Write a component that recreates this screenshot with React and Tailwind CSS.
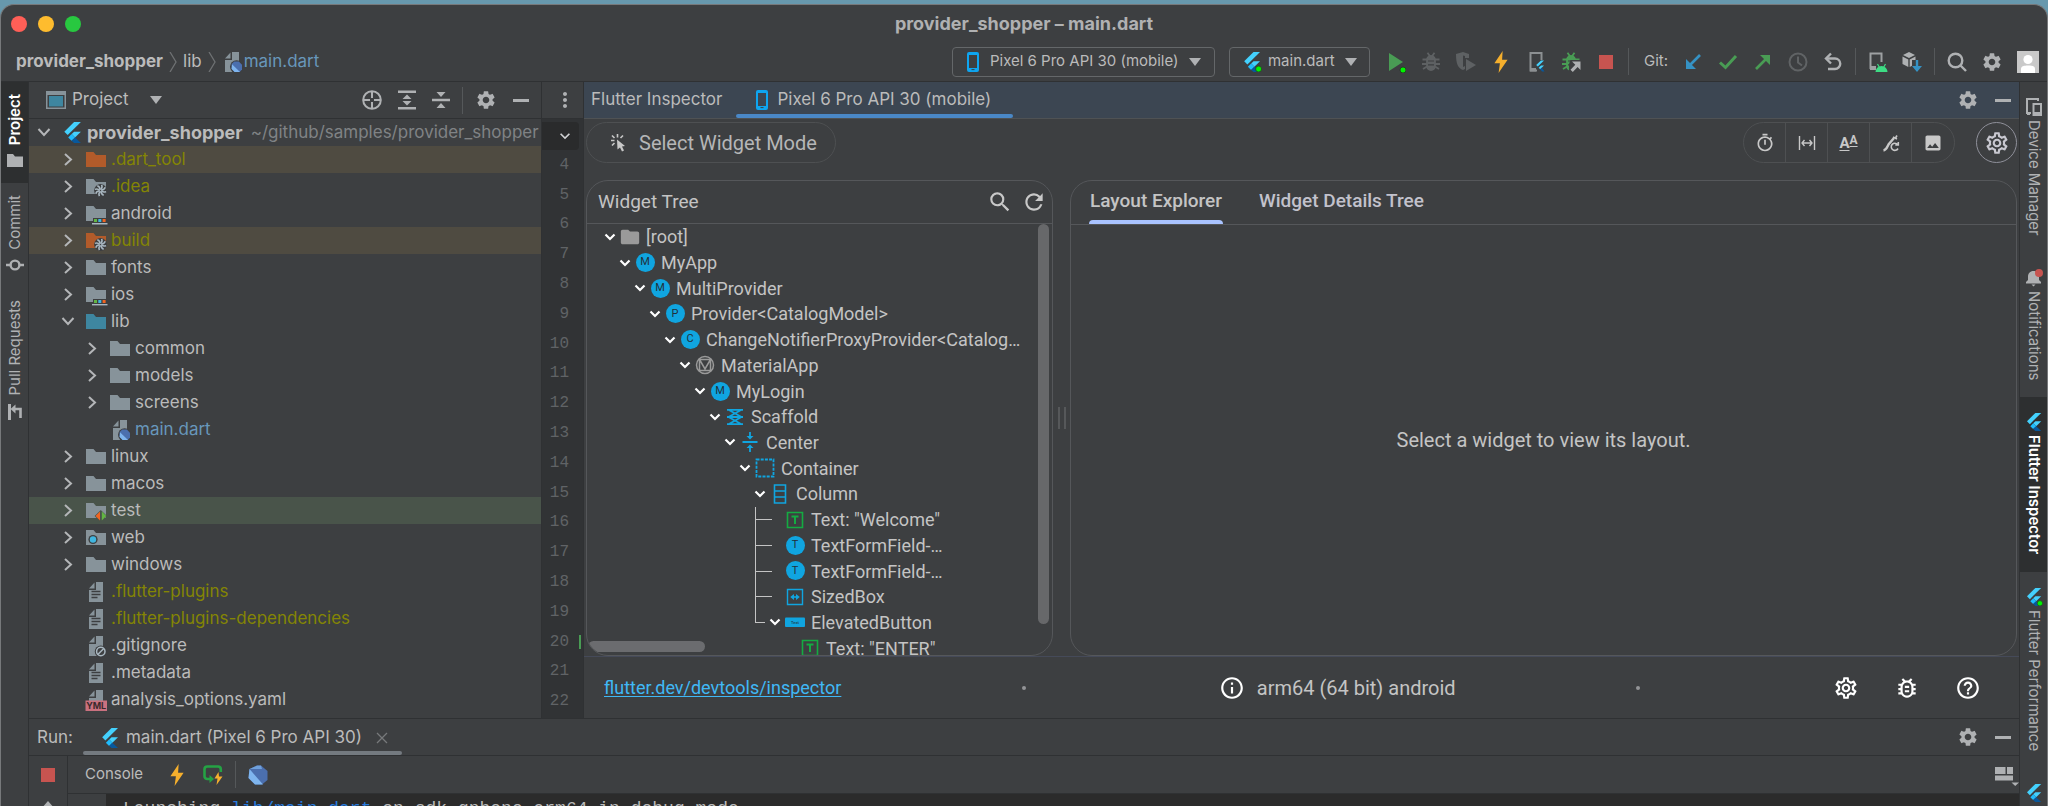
import {
  MdExpandMore,
  MdFolder,
  MdHelpOutline,
  MdImage,
  MdMoreVert,
  MdOutlineBugReport,
  MdOutlineInfo,
  MdOutlineSettings,
  MdOutlineTimer,
  MdRefresh,
  MdSearch,
  MdSettings,
} from "react-icons/md";

const projectRows = [
  { name: ".dart_tool", level: 1, icon: "excluded", color: "text-[#848504]", bg: "bg-[#4f4b41]", arrow: "right" },
  { name: ".idea", level: 1, icon: "idea", color: "text-[#848504]", arrow: "right" },
  { name: "android", level: 1, icon: "module", arrow: "right" },
  { name: "build", level: 1, icon: "build", color: "text-[#848504]", bg: "bg-[#4f4b41]", arrow: "right" },
  { name: "fonts", level: 1, icon: "folder", arrow: "right" },
  { name: "ios", level: 1, icon: "module", arrow: "right" },
  { name: "lib", level: 1, icon: "source", arrow: "down" },
  { name: "common", level: 2, icon: "folder", arrow: "right" },
  { name: "models", level: 2, icon: "folder", arrow: "right" },
  { name: "screens", level: 2, icon: "folder", arrow: "right" },
  { name: "main.dart", level: 2, icon: "dart", color: "text-[#6897bb]" },
  { name: "linux", level: 1, icon: "folder", arrow: "right" },
  { name: "macos", level: 1, icon: "folder", arrow: "right" },
  { name: "test", level: 1, icon: "test", bg: "bg-[#49544a]", arrow: "right" },
  { name: "web", level: 1, icon: "web", arrow: "right" },
  { name: "windows", level: 1, icon: "folder", arrow: "right" },
  { name: ".flutter-plugins", level: 1, icon: "text", color: "text-[#848504]" },
  { name: ".flutter-plugins-dependencies", level: 1, icon: "text", color: "text-[#848504]" },
  { name: ".gitignore", level: 1, icon: "ignore" },
  { name: ".metadata", level: 1, icon: "text" },
  { name: "analysis_options.yaml", level: 1, icon: "yaml" },
];

const widgetRows = [
  { name: "[root]", depth: 0, icon: "folder", open: true },
  { name: "MyApp", depth: 1, icon: "M", open: true },
  { name: "MultiProvider", depth: 2, icon: "M", open: true },
  { name: "Provider<CatalogModel>", depth: 3, icon: "P", open: true },
  { name: "ChangeNotifierProxyProvider<Catalog…", depth: 4, icon: "C", open: true },
  { name: "MaterialApp", depth: 5, icon: "material", open: true },
  { name: "MyLogin", depth: 6, icon: "M", open: true },
  { name: "Scaffold", depth: 7, icon: "scaffold", open: true },
  { name: "Center", depth: 8, icon: "center", open: true },
  { name: "Container", depth: 9, icon: "container", open: true },
  { name: "Column", depth: 10, icon: "column", open: true },
  { name: 'Text: "Welcome"', depth: 11, icon: "text", line: "mid" },
  { name: "TextFormField-…", depth: 11, icon: "T", line: "mid" },
  { name: "TextFormField-…", depth: 11, icon: "T", line: "mid" },
  { name: "SizedBox", depth: 11, icon: "sized", line: "mid" },
  { name: "ElevatedButton", depth: 11, icon: "button", open: true, line: "last" },
  { name: 'Text: "ENTER"', depth: 12, icon: "text" },
];

const lineNumbers = Array.from({ length: 19 }, (_, i) => i + 4);

function FlutterLogo({ className = "h-5 w-5", running = false }) {
  return (
    <svg viewBox="0 0 20 20" className={`shrink-0 ${className}`}>
      <path d="M11.5 0H18L5.4 12.4 2.2 9.2Z" fill="#44d1fd" />
      <path d="M11.5 9.2H18L12.4 14.7 9.2 11.5Z" fill="#44d1fd" />
      <path d="M5.9 14.7 9.1 11.5 12.4 14.7 9.1 17.9Z" fill="#1fbcfd" />
      <path d="M9.1 17.9 12.4 14.7 18 20H11.5Z" fill="#08589c" />
      {running && <circle cx="16.6" cy="17" r="3" fill="#00f400" stroke="#2a3a2a" strokeWidth="0.8" />}
    </svg>
  );
}

function FolderShape({ color = "#87939a" }) {
  return <path d="M0 2H7.5L10 5H20V17H0Z" fill={color} />;
}

function PageShape({ color = "#87939a" }) {
  return (
    <>
      <path d="M10 0H17V20H3V8H10Z" fill={color} />
      <path d="M8.5 0.5V6.5H3Z" fill={color} />
    </>
  );
}

function Pinwheel() {
  return (
    <g>
      <circle cx="14.5" cy="13.5" r="6.4" fill="#3d3f41" />
      <g fill="none" stroke="#a9b7c0" strokeWidth="1.5">
        {[0, 45, 90, 135, 180, 225, 270, 315].map((angle) => (
          <path key={angle} d="M14.5 12.6Q17 10.6 15.6 7.9" transform={`rotate(${angle} 14.5 13.5)`} />
        ))}
      </g>
    </g>
  );
}

function FileIcon({ type }) {
  return (
    <svg viewBox="0 0 20 20" className="h-5 w-5 shrink-0 overflow-visible">
      {type === "folder" && <FolderShape />}
      {type === "excluded" && <FolderShape color="#b25b2a" />}
      {type === "source" && <FolderShape color="#3e86a0" />}
      {type === "idea" && (
        <>
          <FolderShape />
          <Pinwheel />
        </>
      )}
      {type === "build" && (
        <>
          <FolderShape color="#b25b2a" />
          <Pinwheel />
        </>
      )}
      {type === "module" && (
        <>
          <FolderShape />
          <path d="M7 14H21V21H7Z" fill="#3d3f41" />
          <path d="M8 15H11V18H8Z" fill="#62b543" />
          <path d="M12.3 15H15.3V18H12.3Z" fill="#40b6e0" />
          <path d="M16.6 15H19.6V18H16.6Z" fill="#f26522" />
          <path d="M6 19H21.5V20.4H6Z" fill="#a9b7c0" />
        </>
      )}
      {type === "test" && (
        <>
          <FolderShape />
          <path d="M14.8 9 21 15 14.8 21 8.6 15Z" fill="#49544a" />
          <path d="M14 10.5V19.5L9.5 15Z" fill="#f26522" />
          <path d="M15.8 10.5V19.5L20.3 15Z" fill="#62b543" />
        </>
      )}
      {type === "web" && (
        <>
          <FolderShape />
          <circle cx="7" cy="11.5" r="4.6" fill="#3d3f41" />
          <circle cx="7" cy="11.5" r="3.2" fill="#40b6e0" />
        </>
      )}
      {type === "text" && (
        <>
          <PageShape />
          <path d="M5.5 9.5H14.5M5.5 12.5H14.5M5.5 15.5H11.5" stroke="#3d3f41" strokeWidth="1.4" />
        </>
      )}
      {type === "ignore" && (
        <>
          <PageShape />
          <circle cx="14.8" cy="15.5" r="6" fill="#3d3f41" />
          <circle cx="14.8" cy="15.5" r="4.2" fill="none" stroke="#a9b7c0" strokeWidth="1.5" />
          <path d="M11.8 18.5 17.8 12.5" stroke="#a9b7c0" strokeWidth="1.5" />
        </>
      )}
      {type === "dart" && (
        <>
          <PageShape />
          <circle cx="14.6" cy="14.8" r="6.6" fill="#3d3f41" />
          <path d="M9.6 12 12.2 9.6H16.8L20 12.8V17.4L17.6 20H12.6L9.6 16.8Z" fill="#4b6fae" />
          <path d="M10 12.2 18 20H12.6L9.6 17Z" fill="#7fb5ee" />
        </>
      )}
      {type === "yaml" && (
        <>
          <PageShape />
          <path d="M-0.5 10.5H21V21H-0.5Z" fill="#c9717f" />
          <text x="10.2" y="19" textAnchor="middle" fontSize="9" fontWeight="700" fill="#3a2a2d">
            YML
          </text>
        </>
      )}
    </svg>
  );
}

function TreeArrow({ direction }) {
  if (!direction) return <span className="w-5 shrink-0" />;
  return (
    <svg viewBox="0 0 20 20" className="h-5 w-5 shrink-0" fill="none" stroke="#b4b6b8" strokeWidth="2">
      {direction === "right" ? <path d="M7 4 13 9.5 7 15" /> : <path d="M4.5 6 10 12 15.5 6" />}
    </svg>
  );
}

function Caret() {
  return (
    <svg viewBox="0 0 12 8" className="h-2 w-3 shrink-0">
      <path d="M0 0H12L6 8Z" fill="#afb1b3" />
    </svg>
  );
}

function Divider({ className = "" }) {
  return <span className={`h-[27px] w-px shrink-0 bg-[#55585a] ${className}`} />;
}

function IconButton({ label, children }) {
  return (
    <button type="button" aria-label={label} className="flex shrink-0 items-center justify-center">
      {children}
    </button>
  );
}

function Minus() {
  return <span className="h-[3px] w-4 bg-[#afb1b3]" />;
}

function TitleBar() {
  return (
    <header className="grid h-[37px] grid-cols-[1fr_auto_1fr] items-center px-2.5">
      <div className="flex gap-[11px]">
        <span className="h-4 w-4 rounded-full bg-[#ff5f57]" />
        <span className="h-4 w-4 rounded-full bg-[#febc2e]" />
        <span className="h-4 w-4 rounded-full bg-[#28c840]" />
      </div>
      <h1 className="text-[18px] font-bold text-[#b0b1b2]">provider_shopper – main.dart</h1>
      <span />
    </header>
  );
}

function BreadcrumbArrow() {
  return (
    <svg viewBox="0 0 8 20" className="mx-1.5 h-5 w-2" fill="none" stroke="#6e7173" strokeWidth="1.3">
      <path d="M1 0 7 10 1 20" />
    </svg>
  );
}

function PhoneIcon() {
  return (
    <svg viewBox="0 0 14 20" className="h-5 w-3.5 shrink-0">
      <path
        d="M3 0H11A2 2 0 0 1 13 2V18A2 2 0 0 1 11 20H3A2 2 0 0 1 1 18V2A2 2 0 0 1 3 0ZM3 3V16H11V3Z"
        fill="#0ea5f0"
        fillRule="evenodd"
      />
      <path d="M5.5 17.6H8.5" stroke="#3d3f41" />
    </svg>
  );
}

function Bolt() {
  return (
    <svg viewBox="0 0 14 20" className="h-[22px] w-5">
      <path d="M8.5 0 1 11.2H6L4.8 20 13 8H8Z" fill="#f5af2d" />
    </svg>
  );
}

function Beetle({ color }) {
  return (
    <g fill="none" stroke={color} strokeWidth="1.8">
      <path d="M6 8A4 4 0 0 1 14 8V14A4 4 0 0 1 6 14Z" fill={color} />
      <path d="M6.5 0.8 8.8 4M13.5 0.8 11.2 4M1.5 7.5H6M1 12H6M2 17 6 14.5M18.5 7.5H14M19 12H14M18 17 14 14.5" />
      <path d="M7 9H13M7 12.8H13" stroke="#3d3f41" strokeWidth="1.2" />
    </g>
  );
}

function ToolbarIcons() {
  return (
    <>
      <div className="flex items-center gap-[15px]">
        <IconButton label="Run">
          <svg viewBox="0 0 20 22" className="h-[22px] w-5">
            <path d="M3 2 17 11 3 20Z" fill="#499c54" />
            <circle cx="17" cy="19" r="3" fill="#00f400" stroke="#233523" strokeWidth="0.8" />
          </svg>
        </IconButton>
        <IconButton label="Debug">
          <svg viewBox="0 0 20 20" className="h-5 w-5">
            <Beetle color="#5e6163" />
          </svg>
        </IconButton>
        <IconButton label="Run with coverage">
          <svg viewBox="0 0 20 20" className="h-5 w-5">
            <path d="M0 2 7 0 13 2V6H9V4L7 3.5V15L9 14V17L7 18C2 16 0 12 0 2Z" fill="#5e6163" />
            <path d="M10 7 20 13 10 19Z" fill="#5e6163" />
          </svg>
        </IconButton>
        <IconButton label="Hot reload">
          <Bolt />
        </IconButton>
        <IconButton label="Flutter device">
          <svg viewBox="0 0 20 20" className="h-5 w-5">
            <path d="M11 18.5H4.5V1H15.5V8" fill="none" stroke="#8c9092" strokeWidth="2" />
            <path d="M4 16H10V19.5H4Z" fill="#8c9092" />
            <path d="M15 8.5H18L11.8 14.5 10.2 13Z" fill="#44d1fd" />
            <path d="M15 13.5H18L14.2 17.2 12.7 15.8Z" fill="#44d1fd" />
            <path d="M14.2 17.2 15.8 15.8 18.5 19.5H16Z" fill="#08589c" />
          </svg>
        </IconButton>
        <IconButton label="Attach debugger">
          <svg viewBox="0 0 20 20" className="h-5 w-5">
            <Beetle color="#499c54" />
            <path d="M9.5 8H20V20H8V12Z" fill="#3d3f41" />
            <path d="M11 9.5H19.5V18L16.6 15.1 11.8 20 9.5 17.7 14.3 12.8Z" fill="#afb1b3" />
          </svg>
        </IconButton>
        <IconButton label="Stop">
          <span className="ml-[3px] h-3.5 w-3.5 bg-[#c75450]" />
        </IconButton>
        <Divider />
        <span className="text-[15px]">Git:</span>
        <IconButton label="Update project">
          <svg viewBox="0 0 20 20" className="h-5 w-5">
            <path d="M17 3 7 13" stroke="#3592c4" strokeWidth="2.6" />
            <path d="M3 7V17H13Z" fill="#3592c4" />
          </svg>
        </IconButton>
        <IconButton label="Commit">
          <svg viewBox="0 0 20 20" className="h-5 w-5" fill="none" stroke="#499c54" strokeWidth="3">
            <path d="M2 10.5 7.5 15.5 18 4" />
          </svg>
        </IconButton>
        <IconButton label="Push">
          <svg viewBox="0 0 20 20" className="h-5 w-5">
            <path d="M3 17 13 7" stroke="#499c54" strokeWidth="2.6" />
            <path d="M7 3H17V13Z" fill="#499c54" />
          </svg>
        </IconButton>
        <IconButton label="Show history">
          <svg viewBox="0 0 20 20" className="h-5 w-5" fill="none" stroke="#606365" strokeWidth="2">
            <circle cx="10" cy="10" r="8.5" />
            <path d="M10 4.5V10.5L14 13.5" />
          </svg>
        </IconButton>
        <IconButton label="Rollback">
          <svg viewBox="0 0 20 20" className="h-5 w-5" fill="none" stroke="#afb1b3" strokeWidth="2.4">
            <path d="M3 6.5H12A5.2 5.2 0 0 1 12 17H5" />
            <path d="M8 1.5 3 6.5 8 11.5" />
          </svg>
        </IconButton>
      </div>
      <Divider className="mx-3" />
      <div className="flex items-center gap-3.5">
        <IconButton label="Device manager">
          <svg viewBox="0 0 20 20" className="h-5 w-5">
            <path d="M8 16H2.5V1.5H13.5V10" fill="none" stroke="#9da0a2" strokeWidth="2" />
            <path d="M2 14H8V18H2Z" fill="#9da0a2" />
            <path d="M7.5 20A6 6 0 0 1 19.5 20Z" fill="#3ddc84" />
            <path d="M9.5 12 11.5 15.5M17.5 12 15.5 15.5" stroke="#3ddc84" strokeWidth="1.2" />
          </svg>
        </IconButton>
        <IconButton label="SDK manager">
          <svg viewBox="0 0 20 20" className="h-5 w-5">
            <path d="M7 0 13 3 7 6 1 3Z" fill="#afb1b3" />
            <path d="M0.5 4.5 6.3 7.4V15L0.5 12Z" fill="#afb1b3" />
            <path d="M13.5 4.5 7.7 7.4V15L10 13.8V8H13.5Z" fill="#afb1b3" />
            <path d="M13.8 8H16.2V14H20L15 20 10 14H13.8Z" fill="#3592c4" />
          </svg>
        </IconButton>
      </div>
      <Divider className="mx-3" />
      <div className="flex items-center gap-3.5">
        <IconButton label="Search everywhere">
          <svg viewBox="0 0 20 20" className="h-5 w-5" fill="none" stroke="#afb1b3" strokeWidth="2.4">
            <circle cx="8.5" cy="8.5" r="6.8" />
            <path d="M13.5 13.5 19 19" />
          </svg>
        </IconButton>
        <IconButton label="Settings">
          <MdSettings className="h-[22px] w-[22px] text-[#afb1b3]" />
        </IconButton>
        <IconButton label="Account">
          <svg viewBox="0 0 22 22" className="h-[22px] w-[22px]">
            <path d="M0 0H22V22H0Z" fill="#c9c9c9" />
            <circle cx="11" cy="8.5" r="4.6" fill="#fff" />
            <path d="M4 22V18C4 15 7 14.5 11 14.5S18 15 18 18V22Z" fill="#fff" />
          </svg>
        </IconButton>
      </div>
    </>
  );
}

function Toolbar() {
  return (
    <div className="flex h-[40px] items-center border-b border-[#2f3133] pr-2 pl-[15px]">
      <nav aria-label="Breadcrumb" className="flex items-center text-[17px]">
        <a href="#root" className="font-bold">provider_shopper</a>
        <BreadcrumbArrow />
        <a href="#lib">lib</a>
        <BreadcrumbArrow />
        <a href="#main" className="flex items-center gap-0.5 text-[#6897bb]">
          <FileIcon type="dart" />
          main.dart
        </a>
      </nav>
      <div className="ml-auto flex items-center gap-3.5">
        <label className="flex h-[30px] items-center gap-2.5 rounded-[4px] border border-[#646769] px-[13px]">
          <PhoneIcon />
          <select aria-label="Device" className="appearance-none text-[15px] outline-none">
            <option>Pixel 6 Pro API 30 (mobile)</option>
          </select>
          <Caret />
        </label>
        <label className="flex h-[30px] items-center gap-1.5 rounded-[4px] border border-[#646769] px-3">
          <FlutterLogo running />
          <select aria-label="Run configuration" className="mr-1 appearance-none text-[15px] outline-none">
            <option>main.dart</option>
          </select>
          <Caret />
        </label>
      </div>
      <div className="ml-4 flex items-center">
        <ToolbarIcons />
      </div>
    </div>
  );
}

function RailButton({ label, active = false, side = "left", icon }) {
  return (
    <button
      type="button"
      className={`flex w-full flex-col items-center text-[15px] ${
        active ? "bg-[#2d2f30] font-semibold text-white" : "text-[#b0b2b4]"
      } ${side === "left" ? "gap-2 pt-3 pb-4" : "gap-1 pt-4 pb-[17px]"}`}
    >
      {side === "right" && icon}
      <span className={`leading-5 [writing-mode:vertical-rl] ${side === "left" ? "rotate-180" : ""}`}>{label}</span>
      {side === "left" && icon}
    </button>
  );
}

function LeftRail() {
  return (
    <aside className="w-7 shrink-0 border-r border-[#2f3133]">
      <RailButton
        label="Project"
        active
        icon={
          <svg viewBox="0 0 16 14" className="h-3.5 w-4">
            <path d="M0 1H6L8 3.5H16V14H0Z" fill="#afb1b3" />
          </svg>
        }
      />
      <RailButton
        label="Commit"
        icon={
          <svg viewBox="0 0 18 14" className="h-3.5 w-[18px]" fill="none" stroke="#afb1b3" strokeWidth="2.4">
            <circle cx="9" cy="7" r="4.4" />
            <path d="M0 7H4.5M13.5 7H18" />
          </svg>
        }
      />
      <RailButton
        label="Pull Requests"
        icon={
          <svg viewBox="0 0 16 16" className="h-4 w-4" fill="none" stroke="#afb1b3">
            <path d="M2.5 0V16" strokeWidth="3" />
            <path d="M7 5H13.5V14" strokeWidth="2.6" />
            <path d="M8.5 0.5V9.5L3.5 5Z" fill="#afb1b3" stroke="none" />
          </svg>
        }
      />
    </aside>
  );
}

function RightRail() {
  return (
    <aside className="w-7 shrink-0 overflow-hidden border-l border-[#2f3133]">
      <RailButton
        side="right"
        label="Device Manager"
        icon={
          <svg viewBox="0 0 18 18" className="h-[18px] w-[18px]" fill="none" stroke="#afb1b3" strokeWidth="2">
            <path d="M13 3V1H2V15H6" />
            <path d="M2 15.5H5" strokeWidth="3" />
            <path d="M8.5 6H16V17H8.5Z" />
            <path d="M8 15.5H16.5" strokeWidth="3" />
          </svg>
        }
      />
      <RailButton
        side="right"
        label="Notifications"
        icon={
          <svg viewBox="0 0 18 18" className="h-[18px] w-[18px]">
            <path d="M1 14.5V13L3 11V7.5C3 4.5 5 2 8.5 2S14 4.5 14 7.5V11L16 13V14.5Z" fill="#afb1b3" />
            <path d="M6.5 15.5H10.5L8.5 17.5Z" fill="#afb1b3" />
            <circle cx="14" cy="4" r="4" fill="#c75450" />
          </svg>
        }
      />
      <RailButton side="right" label="Flutter Inspector" active icon={<FlutterLogo className="h-[18px] w-[18px]" />} />
      <RailButton
        side="right"
        label="Flutter Performance"
        icon={<FlutterLogo className="h-[18px] w-[18px]" running />}
      />
      <button type="button" aria-label="Flutter Outline" className="flex w-full justify-center pt-4">
        <FlutterLogo className="h-[18px] w-[18px]" />
      </button>
    </aside>
  );
}

function ProjectPanel() {
  return (
    <section className="flex w-[512px] shrink-0 flex-col">
      <div className="flex h-[37px] items-center border-b border-[#2f3133] pr-3 pl-[17px]">
        <svg viewBox="0 0 20 18" className="h-[18px] w-5">
          <path d="M0 0H20V18H0Z" fill="#87939a" />
          <path d="M1.5 4H18.5V16.5H1.5Z" fill="#3d3f41" />
          <path d="M3 5H17V15.5H3Z" fill="#3e86a0" />
        </svg>
        <button type="button" className="ml-1.5 flex items-center gap-[22px] text-[17px]">
          Project
          <Caret />
        </button>
        <div className="ml-auto flex items-center gap-4">
          <IconButton label="Select opened file">
            <svg viewBox="0 0 20 20" className="h-5 w-5" fill="none" stroke="#afb1b3" strokeWidth="2">
              <circle cx="10" cy="10" r="8.8" />
              <path d="M10 1V8M10 12V19M1 10H8M12 10H19" />
            </svg>
          </IconButton>
          <IconButton label="Expand all">
            <svg viewBox="0 0 18 20" className="h-5 w-[18px]" fill="#afb1b3">
              <path d="M0 0.5H18V3H0ZM0 17H18V19.5H0ZM9 4.5 13.5 9H4.5ZM9 15.5 13.5 11H4.5Z" />
            </svg>
          </IconButton>
          <IconButton label="Collapse all">
            <svg viewBox="0 0 18 20" className="h-5 w-[18px]" fill="#afb1b3">
              <path d="M0 8.8H18V11.2H0ZM9 7 13.5 2H4.5ZM9 13 13.5 18H4.5Z" />
            </svg>
          </IconButton>
          <Divider className="-mx-1" />
          <IconButton label="Panel options">
            <MdSettings className="h-[22px] w-[22px] text-[#afb1b3]" />
          </IconButton>
          <IconButton label="Hide project panel">
            <Minus />
          </IconButton>
        </div>
      </div>
      <ul className="min-h-0 flex-1 overflow-hidden text-[17px]">
        <li className="flex h-[27px] items-center pl-[5px] whitespace-nowrap">
          <TreeArrow direction="down" />
          <FlutterLogo className="ml-2 h-[21px] w-[21px]" />
          <span className="ml-1 text-[18px] font-bold">provider_shopper</span>
          <span className="ml-2 text-[#808385]">~/github/samples/provider_shopper</span>
        </li>
        {projectRows.map((row) => (
          <li
            key={row.name}
            className={`flex h-[27px] items-center ${row.bg ?? ""} ${row.color ?? ""}`}
            style={{ paddingLeft: 5 + row.level * 24 }}
          >
            <TreeArrow direction={row.arrow} />
            <span className="mr-[5px] ml-2">
              <FileIcon type={row.icon} />
            </span>
            {row.name}
          </li>
        ))}
      </ul>
    </section>
  );
}

function EditorGutter() {
  return (
    <section className="flex w-[43px] shrink-0 flex-col border-x border-[#2f3133] bg-[#313335]">
      <div className="flex h-[37px] items-center justify-end border-b border-[#2f3133] bg-[#3d3f41] pr-1.5">
        <IconButton label="More">
          <MdMoreVert className="h-6 w-6 text-[#afb1b3]" />
        </IconButton>
      </div>
      <button
        type="button"
        aria-label="Show tabs"
        className="mt-[3px] mr-1 flex h-7 items-center justify-end rounded-r bg-[#2a2b2c] pr-1"
      >
        <MdExpandMore className="h-5 w-5 text-[#d0d2d4]" />
      </button>
      <ol className="flex min-h-0 flex-1 flex-col pb-0.5 text-right font-[Liberation_Mono,monospace] text-base text-[#606366]">
        {lineNumbers.map((n) => (
          <li
            key={n}
            className={`mr-0.5 flex flex-1 items-center justify-end pr-3 ${
              n === 20 ? "bg-[linear-gradient(#499c54,#499c54)] bg-[length:2px_14px] bg-right bg-no-repeat" : ""
            }`}
          >
            {n}
          </li>
        ))}
      </ol>
    </section>
  );
}

function WidgetIcon({ type }) {
  if (type.length === 1) {
    return (
      <span className="flex h-[19px] w-[19px] items-center justify-center rounded-full bg-[#10a5e0] text-[11px] text-[#20303a]">
        {type}
      </span>
    );
  }
  if (type === "folder") return <MdFolder className="h-[22px] w-[22px] shrink-0 text-[#9a9a9a]" />;
  return (
    <svg viewBox="0 0 20 20" className="h-5 w-5" fill="none" stroke="#10a5e0" strokeWidth="1.6">
      {type === "material" && (
        <g stroke="#9a9a9a" strokeWidth="1.5">
          <circle cx="10" cy="10" r="8.5" />
          <path d="M4.5 4.5H15.5V15.5H4.5ZM4.5 4.5 10 14 15.5 4.5" />
        </g>
      )}
      {type === "scaffold" && (
        <path d="M2 2.8H18M2 10H18M2 17.2H18M4 3 16 9.8M16 3 4 9.8M4 10.2 16 17M16 10.2 4 17" strokeWidth="1.8" />
      )}
      {type === "center" && (
        <>
          <path d="M2.5 10H17.5M10 0V5M10 15V20" strokeWidth="1.8" />
          <path d="M6.5 4H13.5L10 7.5ZM6.5 16H13.5L10 12.5Z" fill="#10a5e0" stroke="none" />
        </>
      )}
      {type === "container" && <path d="M1.5 1.5H18.5V18.5H1.5Z" strokeDasharray="3 1.2" strokeWidth="1.8" />}
      {type === "column" && <path d="M4.5 1H15.5V19H4.5ZM4.5 7H15.5M4.5 13H15.5" />}
      {type === "text" && (
        <g stroke="#14ab42">
          <path d="M2.5 2.5H17.5V17.5H2.5Z" />
          <path d="M6.5 6.5H13.5M10 6.5V14" strokeWidth="2" />
        </g>
      )}
      {type === "sized" && (
        <>
          <path d="M2.5 2.5H17.5V17.5H2.5Z" strokeWidth="1.4" />
          <path d="M7 10H13" />
          <path d="M5.2 10 9 7V13ZM14.8 10 11 7V13Z" fill="#10a5e0" stroke="none" />
        </>
      )}
      {type === "button" && (
        <>
          <rect x="0" y="5.5" width="20" height="9.5" rx="1" fill="#10a5e0" stroke="none" />
          <text x="10" y="11.7" textAnchor="middle" fontSize="4" fontWeight="700" fill="#1c4a5e" stroke="none">
            Text
          </text>
        </>
      )}
    </svg>
  );
}

function WidgetRow({ row }) {
  return (
    <li className="flex min-h-0 flex-1 items-stretch">
      <span className="flex shrink-0 justify-end" style={{ width: row.depth * 15 + 13 }}>
        {row.line && (
          <span className="flex w-2.5 flex-col">
            <span className="flex-1 border-b border-l border-[#c4c4c4]" />
            <span className={`flex-1 ${row.line === "mid" ? "border-l border-[#c4c4c4]" : ""}`} />
          </span>
        )}
      </span>
      <span className="relative flex w-5 shrink-0 items-center justify-center">
        {row.open && (
          <svg viewBox="0 0 12 8" className="h-2 w-3" fill="none" stroke="#fff" strokeWidth="2.2">
            <path d="M1.5 1.5 6 6 10.5 1.5" />
          </svg>
        )}
        {row.line === "mid" && (
          <span className="flex h-full w-full flex-col">
            <span className="w-[7px] flex-1 border-b border-[#c4c4c4]" />
            <span className="flex-1" />
          </span>
        )}
      </span>
      <span className="flex w-5 shrink-0 items-center justify-center">
        <WidgetIcon type={row.icon} />
      </span>
      <span className="flex items-center pl-1.5 whitespace-nowrap">{row.name}</span>
    </li>
  );
}

function WidgetTree() {
  return (
    <section className="relative flex w-[467px] shrink-0 flex-col overflow-hidden rounded-[22px] border border-[#55575a]">
      <div className="flex h-[43px] shrink-0 items-center border-b border-[#55575a] pr-[5px] pl-[11px]">
        <h2 className="mr-auto text-[19px]">Widget Tree</h2>
        <IconButton label="Search widgets">
          <MdSearch className="mr-2 h-[26px] w-[26px] text-[#c8c8c8]" />
        </IconButton>
        <IconButton label="Refresh tree">
          <MdRefresh className="h-[26px] w-[26px] text-[#c8c8c8]" />
        </IconButton>
      </div>
      <ul className="-mb-1.5 flex min-h-0 flex-1 flex-col text-[18px]">
        {widgetRows.map((row, i) => (
          <WidgetRow key={i} row={row} />
        ))}
      </ul>
      <span className="absolute top-[43px] right-[3px] bottom-[31px] w-[11px] rounded-full bg-[#67686a]" />
      <span className="absolute bottom-[3px] left-px h-[11px] w-[117px] rounded-full bg-[#77787a]/80" />
    </section>
  );
}

const inspectorTools = [
  { label: "Slow animations", icon: <MdOutlineTimer className="h-5 w-5" /> },
  {
    label: "Show guidelines",
    icon: (
      <svg viewBox="0 0 18 16" className="h-4 w-[18px]" fill="none" stroke="currentColor" strokeWidth="1.4">
        <path d="M1.5 1V15M16.5 1V15M4 8H14M6.5 5 4 8 6.5 11M11.5 5 14 8 11.5 11" />
      </svg>
    ),
  },
  {
    label: "Show baselines",
    icon: (
      <span className="flex items-start leading-none font-bold">
        <span className="pt-0.5 text-[15px] underline underline-offset-2">A</span>
        <span className="text-[12px] underline underline-offset-2">A</span>
      </span>
    ),
  },
  {
    label: "Highlight repaints",
    icon: (
      <svg viewBox="0 0 18 18" className="h-[18px] w-[18px]" fill="none" stroke="currentColor" strokeWidth="1.6">
        <path d="M1.5 16.5C4.5 16 5 13.5 6.5 10.5L12 4" strokeWidth="2.4" />
        <path d="M11 3 15 5" strokeWidth="1.4" />
        <path d="M13.5 4 15 1.5" />
        <path d="M15.6 10.5A3.6 3.6 0 1 0 16 14.5M16.3 8V11H13.3" />
      </svg>
    ),
  },
  { label: "Highlight oversized images", icon: <MdImage className="h-5 w-5" /> },
];

function InspectorToolbar() {
  return (
    <div className="flex items-center pt-[3px]">
      <button
        type="button"
        className="flex h-[41px] items-center gap-3 rounded-full border border-[#4e5052] pr-[18px] pl-6 text-[20px] text-[#b5b6b7]"
      >
        <svg viewBox="0 0 16 18" className="h-[18px] w-4" fill="none" stroke="#c8c8c8" strokeWidth="1.6">
          <path d="M6.5 0V3.5M1 1.5 3.5 4M12 1.5 9.5 4M0 6.5H3.5M1 11.5 3.5 9" />
          <path d="M6 5.5 14 12 11 12.5 13 16.5 11 17.5 9 13.5 6.5 15.5Z" fill="#c8c8c8" stroke="none" />
        </svg>
        Select Widget Mode
      </button>
      <div className="mr-[21px] ml-auto flex h-[41px] divide-x divide-[#4e5052] rounded-full border border-[#4e5052] text-[#c8c8c8]">
        {inspectorTools.map((tool) => (
          <button
            key={tool.label}
            type="button"
            aria-label={tool.label}
            className="flex w-[42px] items-center justify-center"
          >
            {tool.icon}
          </button>
        ))}
      </div>
      <button
        type="button"
        aria-label="Inspector settings"
        className="flex h-[41px] w-[41px] items-center justify-center rounded-full border border-[#8f909a] text-[#c8c8d0]"
      >
        <MdOutlineSettings className="h-[26px] w-[26px]" />
      </button>
    </div>
  );
}

function DetailsPanel() {
  return (
    <section className="flex min-w-0 flex-1 flex-col rounded-[22px] border border-[#55575a]">
      <div
        role="tablist"
        className="flex h-11 shrink-0 items-stretch gap-9 border-b border-[#55575a] pl-[18px] text-[19px] font-medium"
      >
        <button type="button" role="tab" aria-selected="true" className="flex flex-col items-center">
          <span className="flex flex-1 items-center px-px pt-0.5">Layout Explorer</span>
          <span className="h-1 w-full rounded-t-full bg-[#a9c3ff]" />
        </button>
        <button type="button" role="tab" aria-selected="false" className="pb-0.5 text-[#c2c2cc]">
          Widget Details Tree
        </button>
      </div>
      <p className="flex flex-1 items-center justify-center text-[20px]">Select a widget to view its layout.</p>
    </section>
  );
}

function InspectorFooter() {
  return (
    <footer className="flex h-[62px] items-center justify-between border-t border-[#454a59] pr-[38px] pl-5 text-[18px]">
      <a href="#inspector" className="text-[#40b8f5] underline underline-offset-2">
        flutter.dev/devtools/inspector
      </a>
      <span className="mr-3 h-1 w-1 rounded-full bg-[#939496]" />
      <p className="flex items-center gap-3 text-[20px]">
        <MdOutlineInfo className="h-[26px] w-[26px] text-white" />
        arm64 (64 bit) android
      </p>
      <span className="mr-3 h-1 w-1 rounded-full bg-[#939496]" />
      <div className="flex gap-[35px] text-white">
        <IconButton label="Settings">
          <MdOutlineSettings className="h-[26px] w-[26px]" />
        </IconButton>
        <IconButton label="Report an issue">
          <MdOutlineBugReport className="h-[26px] w-[26px]" />
        </IconButton>
        <IconButton label="Help">
          <MdHelpOutline className="h-[26px] w-[26px]" />
        </IconButton>
      </div>
    </footer>
  );
}

function InspectorPanel() {
  return (
    <section className="flex min-w-0 flex-1 flex-col">
      <div className="flex h-[37px] shrink-0 items-stretch border-b border-[#4f5254] bg-[#3c4652] pr-2 pl-[7px] text-[17px]">
        <h2 className="flex items-center">Flutter Inspector</h2>
        <button type="button" className="ml-3.5 flex flex-col">
          <span className="flex flex-1 items-center gap-2 pt-1 pr-[22px] pl-[19px]">
            <PhoneIcon />
            Pixel 6 Pro API 30 (mobile)
          </span>
          <span className="h-1 w-full rounded-full bg-[#4a88c7]" />
        </button>
        <div className="ml-auto flex items-center gap-4">
          <IconButton label="Inspector options">
            <MdSettings className="h-[22px] w-[22px] text-[#afb1b3]" />
          </IconButton>
          <IconButton label="Hide inspector">
            <Minus />
          </IconButton>
        </div>
      </div>
      <div className="flex min-h-0 flex-1 flex-col font-[Roboto,sans-serif] text-[#c4c4c4]">
        <div className="flex min-h-0 flex-1 flex-col gap-[17px] px-0.5">
          <InspectorToolbar />
          <div className="flex min-h-0 flex-1">
            <WidgetTree />
            <div className="flex w-[17px] shrink-0 items-center justify-center gap-1">
              <span className="h-[22px] w-0.5 bg-[#56585a]" />
              <span className="h-[22px] w-0.5 bg-[#56585a]" />
            </div>
            <DetailsPanel />
          </div>
        </div>
        <InspectorFooter />
      </div>
    </section>
  );
}

function RunPanel() {
  return (
    <section className="shrink-0">
      <div className="flex h-[37px] items-stretch border-t border-[#2f3133] pr-2 pl-2 text-[17px]">
        <h2 className="flex items-center pt-0.5">Run:</h2>
        <div className="ml-2.5 flex flex-col">
          <div className="flex flex-1 items-center gap-1.5 pt-1.5 pr-[14px] pl-[17px]">
            <FlutterLogo />
            main.dart (Pixel 6 Pro API 30)
            <IconButton label="Close tab">
              <svg viewBox="0 0 12 12" className="ml-2 h-3 w-3" stroke="#77797b" strokeWidth="1.3">
                <path d="M1 1 11 11M11 1 1 11" />
              </svg>
            </IconButton>
          </div>
          <span className="h-1 w-full rounded-full bg-[#747a80]" />
        </div>
        <div className="ml-auto flex items-center gap-4">
          <IconButton label="Run options">
            <MdSettings className="h-[22px] w-[22px] text-[#afb1b3]" />
          </IconButton>
          <IconButton label="Hide run panel">
            <Minus />
          </IconButton>
        </div>
      </div>
      <div className="flex border-t border-[#2f3133]">
        <div className="flex w-[39px] shrink-0 flex-col items-center border-r border-[#2f3133] pt-3">
          <IconButton label="Stop">
            <span className="h-3.5 w-3.5 bg-[#c75450]" />
          </IconButton>
          <svg viewBox="0 0 14 8" className="mt-[19px] h-[5px] w-3.5 shrink-0" preserveAspectRatio="xMidYMin slice">
            <path d="M7 0 14 8H0Z" fill="#afb1b3" />
          </svg>
        </div>
        <div className="min-w-0 flex-1">
          <div className="flex h-[38px] items-center border-b border-[#2f3133] pl-[17px]">
            <button type="button" className="mr-6 text-[15px]">Console</button>
            <div className="flex items-center gap-4">
              <IconButton label="Hot reload">
                <Bolt />
              </IconButton>
              <IconButton label="Hot restart">
                <svg viewBox="0 0 20 20" className="h-5 w-5">
                  <path
                    d="M8 14H4.5A2.8 2.8 0 0 1 1.5 11.2V4.3A2.8 2.8 0 0 1 4.3 1.5H15A2.8 2.8 0 0 1 17.8 4.3V7"
                    fill="none"
                    stroke="#25a244"
                    strokeWidth="2.6"
                  />
                  <path d="M6.5 10 11 14 6.5 18Z" fill="#25a244" />
                  <path d="M15.5 7 11.5 13.5H14.5L13.5 20 19.5 11.5H16Z" fill="#f5af2d" />
                </svg>
              </IconButton>
            </div>
            <Divider className="mx-3" />
            <IconButton label="Open DevTools">
              <svg viewBox="0 0 20 20" className="h-5 w-5">
                <path d="M1.5 4 9 0.5H13L19.5 6V15L14 19.5H7L0.5 13Z" fill="#4b6fae" />
                <path d="M1.5 4 15 19.5H7L0.5 13Z" fill="#7fb5ee" />
                <path d="M1.5 4 9 0.5H13L14 4Z" fill="#7fb5ee" opacity="0.7" />
              </svg>
            </IconButton>
            <span className="ml-auto">
              <IconButton label="Layout settings">
                <svg viewBox="0 0 24 22" className="h-[22px] w-6" fill="#afb1b3">
                  <path d="M0 3H10.5V10H0ZM12 3H18V10H12ZM0 11.5H18V16.5H0ZM16.5 18.5H24L20.2 22Z" />
                </svg>
              </IconButton>
            </span>
          </div>
          <div className="flex h-3 overflow-hidden bg-[#2b2b2b]">
            <span className="w-[38px] shrink-0 bg-[#3d3f41]" />
            <p className="pt-[3px] pl-[17px] font-[Liberation_Mono,monospace] text-[18px] leading-6 whitespace-nowrap">
              Launching <a href="#main" className="text-[#287bde]">lib/main.dart</a> on sdk gphone arm64 in debug mode...
            </p>
          </div>
        </div>
      </div>
    </section>
  );
}

export default function App() {
  return (
    <div className="flex h-screen flex-col overflow-hidden bg-[#6798ad] pt-1 font-[Inter,sans-serif] text-[#bbbbbb]">
      <div className="flex min-h-0 flex-1 flex-col overflow-hidden rounded-t-[14px] border-x border-t border-[#77797b] bg-[#3d3f41]">
        <TitleBar />
        <Toolbar />
        <div className="flex min-h-0 flex-1">
          <LeftRail />
          <main className="flex min-w-0 flex-1 flex-col">
            <div className="flex min-h-0 flex-1">
              <ProjectPanel />
              <EditorGutter />
              <InspectorPanel />
            </div>
            <RunPanel />
          </main>
          <RightRail />
        </div>
      </div>
    </div>
  );
}
